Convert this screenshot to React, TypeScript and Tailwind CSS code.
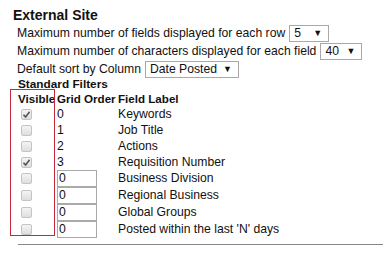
import React from "react"

const rows = [
  { checked: true, order: "0", label: "Keywords", input: false },
  { checked: false, order: "1", label: "Job Title", input: false },
  { checked: false, order: "2", label: "Actions", input: false },
  { checked: true, order: "3", label: "Requisition Number", input: false },
  { checked: false, order: "0", label: "Business Division", input: true },
  { checked: false, order: "0", label: "Regional Business", input: true },
  { checked: false, order: "0", label: "Global Groups", input: true },
  { checked: false, order: "0", label: "Posted within the last 'N' days", input: true },
]

function Select({ value, width }: { value: string; width: string }) {
  return (
    <span
      className={`inline-flex items-center justify-between h-[17px] border border-[#a9a9a9] bg-white pl-[4px] pr-[6px] ml-[4px] ${width}`}
    >
      <span>{value}</span>
      <span className="text-[9px] leading-none">▼</span>
    </span>
  )
}

function Checkbox({ checked }: { checked: boolean }) {
  return (
    <span className="ml-[3px] flex items-center justify-center w-[11px] h-[11px] rounded-[2px] border border-[#c4c4c4] bg-gradient-to-b from-[#f4f4f4] to-[#dedede]">
      {checked && (
        <svg width="9" height="9" viewBox="0 0 9 9">
          <path d="M1.5 4.8 L3.6 7 L7.6 1.8" fill="none" stroke="#555" strokeWidth="1.6" />
        </svg>
      )}
    </span>
  )
}

export default function App() {
  return (
    <div className="relative w-[390px] h-[254px] bg-white text-[#111] text-[12.2px] leading-[17px] whitespace-nowrap font-['Liberation_Sans',Arial,sans-serif] overflow-hidden">
      <div className="pl-[13px] pt-[7px] font-bold text-[14px]">External Site</div>
      <div className="pl-[17px]">
        <div className="flex items-center h-[17px] mt-[1px]">
          Maximum number of fields displayed for each row
          <Select value="5" width="w-[40px]" />
        </div>
        <div className="flex items-center h-[17px] mt-[1px]">
          Maximum number of characters displayed for each field
          <Select value="40" width="w-[42px]" />
        </div>
        <div className="flex items-center h-[17px] mt-[1px]">
          Default sort by Column
          <Select value="Date Posted" width="w-[94px]" />
        </div>
      </div>
      <div className="pl-[18px] font-bold text-[11.8px] h-[14px] leading-[14px] -mt-[1px]">Standard Filters</div>
      <div className="pl-[18px]">
        <div className="flex h-[15px] items-center font-bold text-[11.6px]">
          <span className="w-[39px]">Visible</span>
          <span className="w-[61px]">Grid Order</span>
          <span>Field Label</span>
        </div>
        {rows.map((r, i) => (
          <div key={i} className={`flex items-center ${r.input ? "h-[17px]" : "h-[16px]"}`}>
            <span className="w-[39px] flex items-center">
              <Checkbox checked={r.checked} />
            </span>
            <span className="w-[61px] flex items-center">
              {r.input ? (
                <span className="w-[40px] h-[17px] border border-[#a9a9a9] -mt-[1px] leading-[15px] pl-[1px]">{r.order}</span>
              ) : (
                r.order
              )}
            </span>
            <span>{r.label}</span>
          </div>
        ))}
      </div>
      <div className="ml-[18px] mt-[6px] w-[365px] border-t border-[#888]" />
      {/* annotation box */}
      <div className="absolute left-[10px] top-[89px] w-[45px] h-[147px] border border-[#c8283c] pointer-events-none" />
    </div>
  )
}
